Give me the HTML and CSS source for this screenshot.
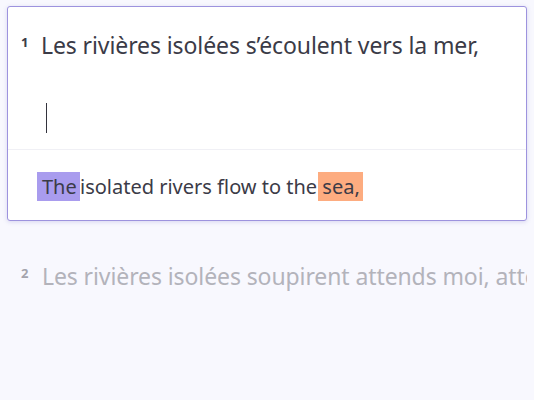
FILE: index.html
```html
<!DOCTYPE html>
<html lang="fr">
<head>
<meta charset="utf-8">
<link rel="stylesheet" href="styles.css">
</head>
<body>
<div class="list">
  <div class="card">
    <div class="source">
      <span class="num">1</span>
      <span class="text">Les rivières isolées s’écoulent vers la mer,</span>
    </div>
    <div class="editor"><span class="caret"></span></div>
    <div class="target"><span class="hl hl-purple">The</span> isolated rivers flow to the <span class="hl hl-orange">sea,</span></div>
  </div>
  <div class="segment muted">
    <span class="num">2</span>
    <span class="text">Les rivières isolées soupirent attends moi, attends moi</span>
  </div>
</div>
</body>
</html>
```
FILE: styles.css
```css
html, body {
  margin: 0;
  padding: 0;
  background: #f8f8fe;
  font-family: "Noto Sans", "DejaVu Sans", sans-serif;
  color: #3b3b47;
  overflow: hidden;
}
.list {
  padding: 6px 7px 0 7px;
}
.card {
  background: #ffffff;
  border: 1px solid #9d93de;
  border-radius: 3px;
  box-shadow: 0 1px 4px rgba(120, 110, 200, 0.25);
}
.source {
  display: flex;
  align-items: baseline;
  padding: 23px 0 0 13px;
  line-height: 31px;
  white-space: nowrap;
}
.num {
  font-size: 13px;
  font-weight: 700;
  width: 20px;
  flex: none;
  position: relative;
  top: -7px;
}
.text {
  font-size: 23px;
  letter-spacing: -0.1px;
}
.editor {
  box-sizing: border-box;
  height: 85px;
  padding: 38px 0 0 38px;
  border-bottom: 1px solid #f0f0f5;
  display: flex;
  align-items: flex-start;
}
.caret {
  width: 1px;
  height: 30px;
  background: #33333d;
}
.target {
  padding: 22px 0 19px 29px;
  font-size: 20px;
  line-height: 29px;
  white-space: nowrap;
}
.hl {
  display: inline-block;
  line-height: 29px;
}
.hl-purple {
  background: #a99cee;
  padding: 0 3px 0 5px;
  margin-right: -5px;
}
.hl-orange {
  background: #fdac80;
  padding: 0 3px 0 4px;
  margin-left: -4px;
}
.segment {
  display: flex;
  align-items: baseline;
  padding: 40px 0 0 14px;
  line-height: 31px;
  white-space: nowrap;
  overflow: hidden;
}
.muted {
  color: #b3b3bb;
}
.muted .num {
  color: #a4a4ad;
  width: 21px;
}
```
